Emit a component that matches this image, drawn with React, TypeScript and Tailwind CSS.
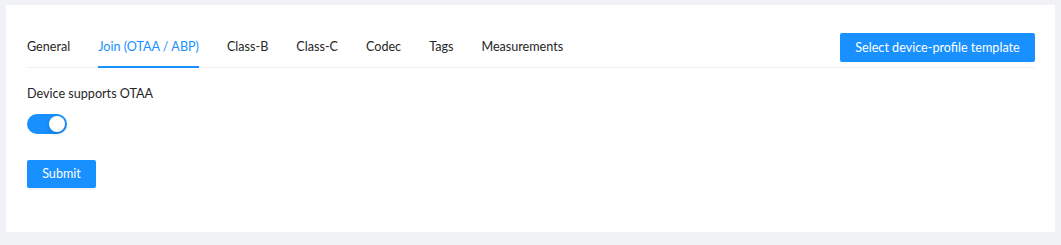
import React, { useState } from 'react';

const tabs = ['General', 'Join (OTAA / ABP)', 'Class-B', 'Class-C', 'Codec', 'Tags', 'Measurements'];

export default function App() {
  const [active, setActive] = useState(1);
  const [otaa, setOtaa] = useState(true);

  return (
    <div className="min-h-screen bg-[#f0f2f5] pt-[5px] px-[6px] font-['Lato',sans-serif] text-[12.6px] text-[#262626]">
      <div className="bg-white h-[227px] pl-[21px] pr-[20px] pt-[28px]">
        <div className="flex items-start justify-between border-b border-[#f0f0f0]">
          <div className="flex gap-[28px]">
            {tabs.map((t, i) => (
              <button
                key={t}
                onClick={() => setActive(i)}
                className={
                  'pt-[3px] pb-[8px] leading-[22px] border-b-2 mb-[-1px] ' +
                  (i === active ? 'text-[#1890ff] border-[#1890ff]' : 'border-transparent')
                }
              >
                {t}
              </button>
            ))}
          </div>
          <button className="h-[29px] w-[195px] bg-[#1890ff] text-white rounded-[2px] leading-[22px]">
            Select device-profile template
          </button>
        </div>

        <div className="mt-[15px] leading-[22px]">Device supports OTAA</div>

        <button
          onClick={() => setOtaa(!otaa)}
          className={
            'mt-[9px] relative block w-[40px] h-[20px] rounded-full ' + (otaa ? 'bg-[#1890ff]' : 'bg-[#bfbfbf]')
          }
        >
          <span
            className={
              'absolute top-[2px] w-[16px] h-[16px] rounded-full bg-white shadow-[0_2px_4px_rgba(0,35,11,0.2)] ' +
              (otaa ? 'left-[22px]' : 'left-[2px]')
            }
          />
        </button>

        <button className="mt-[26px] h-[28px] w-[69px] bg-[#1890ff] text-white rounded-[2px] leading-[22px] shadow-[0_2px_0_rgba(0,0,0,0.045)]">
          Submit
        </button>
      </div>
    </div>
  );
}
